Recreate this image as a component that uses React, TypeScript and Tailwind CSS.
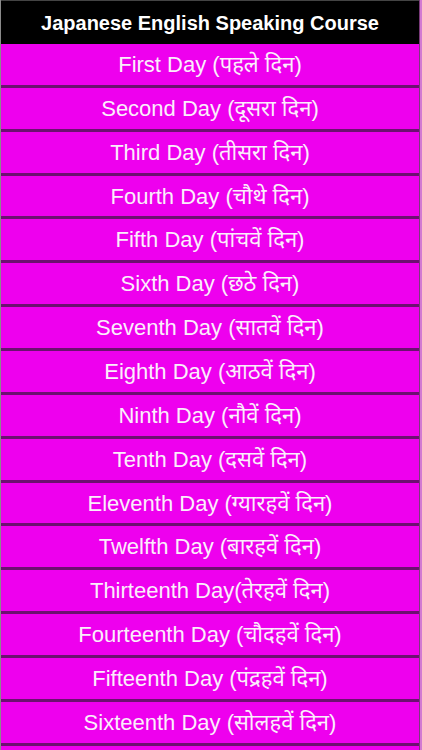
const days = [
  'First Day (पहले दिन)',
  'Second Day (दूसरा दिन)',
  'Third Day (तीसरा दिन)',
  'Fourth Day (चौथे दिन)',
  'Fifth Day (पांचवें दिन)',
  'Sixth Day (छठे दिन)',
  'Seventh Day (सातवें दिन)',
  'Eighth Day (आठवें दिन)',
  'Ninth Day (नौवें दिन)',
  'Tenth Day (दसवें दिन)',
  'Eleventh Day (ग्यारहवें दिन)',
  'Twelfth Day (बारहवें दिन)',
  'Thirteenth Day(तेरहवें दिन)',
  'Fourteenth Day (चौदहवें दिन)',
  'Fifteenth Day (पंद्रहवें दिन)',
  'Sixteenth Day (सोलहवें दिन)',
];

export default function App() {
  return (
    <div className="w-[422px] h-[750px] overflow-hidden bg-[#d27ad2] font-['Liberation_Sans','Noto_Sans',sans-serif]">
      <div className="w-[420px] h-full border-l border-[#8a8a8a] border-r border-r-[#7a3a7a] bg-[#ee00ee]">
        {/* header */}
        <div className="h-[44px] bg-black flex items-center justify-center border-t border-[#444]">
          <h1 className="text-white font-bold text-[20px]">Japanese English Speaking Course</h1>
        </div>

        {/* list */}
        {days.map((d) => (
          <div
            key={d}
            className="h-[43.87px] flex items-center justify-center border-b-[3px] border-[#6c1070] bg-[#ee00ee] text-[#fbeefb] text-[22px]"
          >
            {d}
          </div>
        ))}
      </div>
    </div>
  );
}
